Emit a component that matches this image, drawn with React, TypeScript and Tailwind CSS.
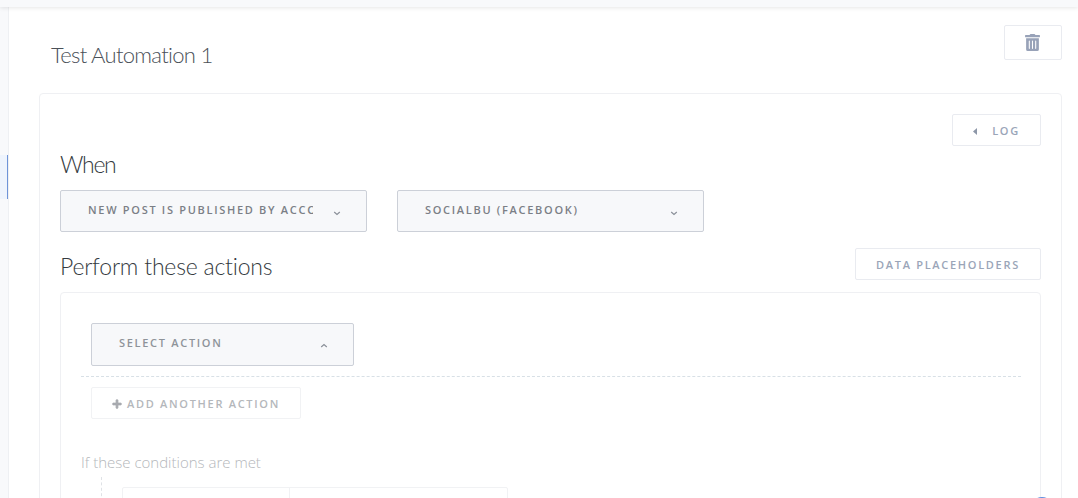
import { FaTrashAlt, FaPlus } from "react-icons/fa";

const head = "font-['Lato','Liberation_Sans',sans-serif]";
const btn = "font-['Open_Sans','Liberation_Sans',sans-serif] font-semibold uppercase";

function Chevron({ up = false }: { up?: boolean }) {
  return (
    <svg width="8" height="5" viewBox="0 0 8 5" className="shrink-0 text-[#8a8f98]">
      <path d={up ? "M1.2 4 L4 1.6 L6.8 4" : "M1.2 1 L4 3.4 L6.8 1"} fill="none" stroke="currentColor" strokeWidth="1.2" />
    </svg>
  );
}

function Select({ label, width, textWidth, height, chevron, up = false, muted = false }: { label: string; width: string; textWidth: string; height: string; chevron: string; up?: boolean; muted?: boolean }) {
  return (
    <div className={`${width} ${height} shrink-0 flex items-start bg-[#f7f8fa] border border-[#ccd0d8] rounded-[2px] pl-[27px] ${btn}`}>
      <span className={`mt-[11px] ${textWidth} overflow-hidden whitespace-nowrap text-[11px] leading-[16px] tracking-[1.7px] ${muted ? "text-[#8e9399]" : "text-[#7b7f86]"}`}>{label}</span>
      <span className={chevron}><Chevron up={up} /></span>
    </div>
  );
}

export default function App() {
  return (
    <div className="relative h-[498px] w-[1078px] overflow-hidden bg-white flex flex-col">
      <div className="h-[7px] shrink-0 bg-[#f8f9fb] shadow-[0_1px_4px_rgba(0,0,0,0.1)] z-10" />
      <div className="flex flex-1 min-h-0">
        <aside className="w-[9px] shrink-0 bg-[#f8f9fb] border-r border-[#eef0f3] pt-[148px]">
          <div className="h-[44px] w-[8px] bg-[#eef4fd] border-r border-[#6f94d8]" />
        </aside>
        <main className="flex-1 min-w-0 pl-[30px] pr-[16px] pt-[18px]">
          <div className="flex justify-between items-start h-[68px]">
            <h1 className={`${head} ml-[12px] mt-[14px] text-[22px] leading-[32px] font-light tracking-[-0.7px] text-[#4a5058]`}>Test Automation 1</h1>
            <button className="w-[58px] h-[35px] flex items-center justify-center border border-[#e9ebf0] rounded-[2px] text-[#98a2b8] text-[17px]">
              <FaTrashAlt className="-ml-[2px]" />
            </button>
          </div>
          <section className="border border-[#eff0f3] rounded-[4px] pl-[20px] pr-[20px] pt-[20px] h-[500px]">
            <div className="flex justify-end">
              <button className={`${btn} w-[89px] h-[32px] pt-[2px] flex items-center justify-center border border-[#e9ebf0] rounded-[2px] text-[11px] tracking-[1.7px] text-[#9aa5b8]`}>
                <svg width="4" height="7" viewBox="0 0 4 7" className="mr-[15px]"><path d="M4 0 L0 3.5 L4 7 Z" fill="#8d97a8" /></svg>
                Log
              </button>
            </div>
            <h2 className={`${head} mt-[4px] text-[23px] leading-[28px] font-light tracking-[-1.3px] text-[#343a40]`}>When</h2>
            <div className="mt-[12px] flex gap-[30px]">
              <Select label="New post is published by account" width="w-[307px]" height="h-[42px]" textWidth="w-[225px]" chevron="mt-[20px] ml-[20px]" />
              <Select label="SocialBu (Facebook)" width="w-[307px]" height="h-[42px]" textWidth="w-[225px]" chevron="mt-[20px] ml-[20px]" />
            </div>
            <div className="mt-[16px] flex justify-between items-start">
              <h2 className={`${head} mt-[4px] text-[23px] leading-[28px] font-light tracking-[-0.2px] text-[#343a40]`}>Perform these actions</h2>
              <button className={`${btn} w-[186px] h-[32px] pt-[2px] flex items-center justify-center border border-[#e9ebf0] rounded-[2px] text-[11px] tracking-[1.7px] text-[#9aa5b8]`}>Data Placeholders</button>
            </div>
            <div className="mt-[12px] h-[300px] border border-[#eff0f3] rounded-[4px] pl-[20px] pr-[19px] pt-[30px]">
              <div className="pl-[10px]">
                <Select label="Select action" width="w-[263px]" height="h-[43px]" textWidth="w-[182px]" chevron="mt-[19px] ml-[19px]" up muted />
              </div>
              <div className="mt-[10px] border-t border-dashed border-[#d8e0e6]" />
              <div className="pl-[10px] mt-[10px]">
                <button className={`${btn} w-[210px] h-[32px] pt-[2px] flex items-center justify-center gap-[5px] border border-[#f1f2f4] rounded-[2px] text-[11px] tracking-[1.7px] text-[#b4b7bb]`}>
                  <FaPlus className="text-[10px] text-[#a8abb0] stroke-[40px]" />
                  Add another action
                </button>
              </div>
              <p className="mt-[32px] font-['Open_Sans','Liberation_Sans',sans-serif] font-light text-[15px] leading-[22px] text-[#b4b7bb]">If these conditions are met</p>
              <div className="flex ml-[20px] mt-[4px]">
                <div className="w-px h-[30px] border-l border-dashed border-[#dfe2e6]" />
                <div className="ml-[20px] mt-[10px] flex h-[40px] w-[386px] border border-[#f1f2f4] rounded-[2px]">
                  <div className="w-[167px] border-r border-[#f1f2f4]" />
                </div>
              </div>
            </div>
          </section>
        </main>
      </div>
      <div className="absolute left-[1031px] top-[497px] h-[22px] w-[22px] rounded-full bg-[#5f8fe0]" />
    </div>
  );
}
